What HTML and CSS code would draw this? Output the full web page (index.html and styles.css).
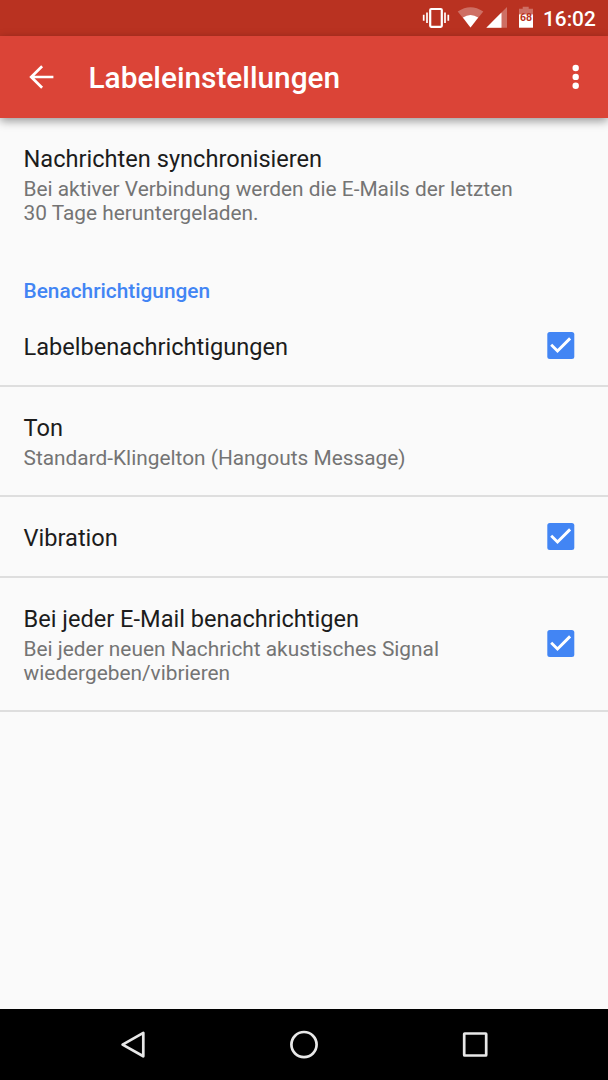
FILE: index.html
```html
<!DOCTYPE html>
<html lang="de">
<head>
    <meta charset="UTF-8">
    <meta name="viewport" content="width=device-width, initial-scale=1.0">
    <title>Labeleinstellungen</title>
    <link rel="stylesheet" href="styles.css">
</head>
<body>
    <div class="screen">
        <div class="status-bar">
            <!-- vibrate, wifi, signal, battery -->
            <svg class="status-icons" width="114" height="36" viewBox="422 0 114 36">
                <rect x="430.2" y="9" width="11.6" height="17.8" rx="1" fill="none" stroke="#fff" stroke-width="2.2"/>
                <path d="M427 12.5v10.5M445 12.500v10.500M423.700 14.800v6M448.300 14.800v6" stroke="#fff" stroke-width="1.7"/>
                <path d="M457.7 11.6Q470.5 3 483.3 11.6L470.5 27.5z" fill="#fff" fill-opacity=".3"/>
                <path d="M462.9 17.6Q470.5 12.3 478.2 17.6L470.5 27.5z" fill="#fff"/>
                <path d="M507 7v20.7h-20.7z" fill="#fff" fill-opacity=".3"/>
                <path d="M501.5 12.5v15.2h-15.2z" fill="#fff"/>
                <path d="M519 8.7h3.7v-1.9h6v1.9h4.3v5.6h-14z" fill="#fff" fill-opacity=".3"/>
                <path d="M519 14.3h14v13.4h-14z" fill="#fff"/>
                <text class="battery-level" x="526" y="21.4" text-anchor="middle">68</text>
            </svg>
            <span class="clock">16:02</span>
        </div>

        <header class="app-bar">
            <svg class="back" width="28" height="28" viewBox="0 0 28 28">
                <path d="M26.4 14H4.4M15.1 3.2L4.2 14l10.9 10.8" fill="none" stroke="#fff" stroke-width="2.7"/>
            </svg>
            <h1>Labeleinstellungen</h1>
            <svg class="overflow" width="8" height="28" viewBox="0 0 8 28" fill="#fff">
                <circle cx="3.7" cy="5" r="3.2"/>
                <circle cx="3.7" cy="13.9" r="3.2"/>
                <circle cx="3.7" cy="22.8" r="3.2"/>
            </svg>
        </header>

        <main class="settings">
            <div class="row sync">
                <div class="text">
                    <div class="title">Nachrichten synchronisieren</div>
                    <div class="summary">Bei aktiver Verbindung werden die E-Mails der letzten<br>30 Tage heruntergeladen.</div>
                </div>
            </div>
            <h2>Benachrichtigungen</h2>
            <div class="row label-row">
                <div class="title">Labelbenachrichtigungen</div>
                <svg class="checkbox" width="28" height="28" viewBox="0 0 28 28">
                    <rect x=".3" y="0" width="27" height="27" rx="2.5" fill="#4285f4"/>
                    <path d="M4.2 12.8l6.300 6.200 12.600-12.600" fill="none" stroke="#fff" stroke-width="2.9"/>
                </svg>
            </div>
            <div class="row tone-row">
                <div class="text">
                    <div class="title">Ton</div>
                    <div class="summary">Standard-Klingelton (Hangouts Message)</div>
                </div>
            </div>
            <div class="row vibrate-row">
                <div class="title">Vibration</div>
                <svg class="checkbox" width="28" height="28" viewBox="0 0 28 28">
                    <rect x=".3" y="0" width="27" height="27" rx="2.5" fill="#4285f4"/>
                    <path d="M4.2 12.8l6.300 6.200 12.600-12.600" fill="none" stroke="#fff" stroke-width="2.9"/>
                </svg>
            </div>
            <div class="row notify-row">
                <div class="text">
                    <div class="title">Bei jeder E-Mail benachrichtigen</div>
                    <div class="summary">Bei jeder neuen Nachricht akustisches Signal<br>wiedergeben/vibrieren</div>
                </div>
                <svg class="checkbox" width="28" height="28" viewBox="0 0 28 28">
                    <rect x=".3" y="0" width="27" height="27" rx="2.5" fill="#4285f4"/>
                    <path d="M4.2 12.8l6.300 6.200 12.600-12.600" fill="none" stroke="#fff" stroke-width="2.9"/>
                </svg>
            </div>
        </main>

        <nav class="nav-bar">
            <svg width="30" height="32" viewBox="0 0 30 32">
                <path d="M25.3 3.9v23.4L4.6 15.6z"/>
            </svg>
            <svg width="30" height="32" viewBox="0 0 30 32">
                <circle cx="15" cy="15.6" r="12.6"/>
            </svg>
            <svg width="30" height="32" viewBox="0 0 30 32">
                <rect x="4.2" y="4.5" width="22" height="22" rx=".5"/>
            </svg>
        </nav>
    </div>
</body>
</html>
```
FILE: styles.css
```css
* {
    margin: 0;
    padding: 0;
    box-sizing: border-box;
}

body {
    font-family: Roboto, sans-serif;
    background-color: #fafafa;
    color: #1c1c1c;
}

svg {
    display: block;
    flex: none;
}

.screen {
    display: flex;
    flex-direction: column;
    width: 608px;
    height: 1080px;
}

.status-bar {
    display: flex;
    justify-content: flex-end;
    align-items: center;
    height: 36px;
    padding-right: 12px;
    background-color: #b93221;
    color: white;
}

.battery-level {
    font-size: 10.5px;
    font-weight: bold;
    fill: #b93221;
}

.clock {
    width: 53px;
    margin-left: 7px;
    font-size: 20.8px;
    font-weight: 500;
    line-height: 36px;
    padding-top: 1px;
}

.app-bar {
    display: flex;
    align-items: center;
    height: 82px;
    padding: 0 28px 0 27px;
    background-color: #db4437;
    color: white;
    box-shadow: 0 3px 9px rgba(0, 0, 0, 0.4);
}

.app-bar h1 {
    flex: 1;
    margin-left: 33.5px;
    font-size: 29.8px;
    font-weight: 500;
}

.settings {
    flex: 1;
}

.row {
    display: flex;
    justify-content: space-between;
    align-items: center;
    padding: 0 33px 0 23.5px;
    border-bottom: 2px solid #dedede;
}

.title {
    padding-top: 2px;
    font-size: 23.6px;
    line-height: 28px;
}

.summary {
    margin-top: 4px;
    font-size: 20.85px;
    line-height: 24px;
    color: #747474;
}

.sync {
    height: 132px;
    border-bottom: none;
}

h2 {
    height: 56px;
    padding: 27px 23.5px 0;
    font-size: 20.85px;
    font-weight: 500;
    line-height: 28px;
    color: #4285f4;
}

.label-row,
.vibrate-row {
    height: 81px;
}

.tone-row {
    height: 110px;
}

.notify-row {
    height: 134px;
}

.nav-bar {
    display: flex;
    justify-content: center;
    align-items: center;
    gap: 141px;
    height: 71px;
    background-color: black;
}

.nav-bar svg {
    fill: none;
    stroke: #e8e8e8;
    stroke-width: 2.7;
    stroke-linejoin: round;
}
```
